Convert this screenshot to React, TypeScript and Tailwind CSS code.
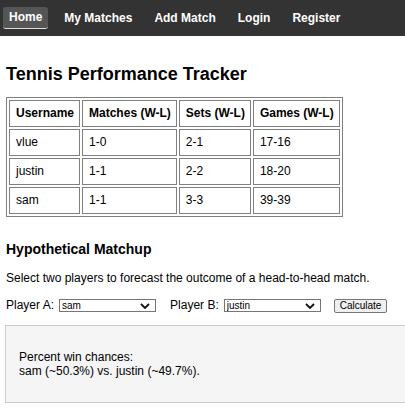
import React from 'react';

const players = [
  { name: 'vlue', matches: '1-0', sets: '2-1', games: '17-16' },
  { name: 'justin', matches: '1-1', sets: '2-2', games: '18-20' },
  { name: 'sam', matches: '1-1', sets: '3-3', games: '39-39' },
];

const navLinks = ['Home', 'My Matches', 'Add Match', 'Login', 'Register'];

const Chevron = () => (
  <svg viewBox="0 0 10 6" className="pointer-events-none absolute right-[6px] top-[4px] h-[6px] w-[10px]">
    <path d="M1 1l4 4 4-4" fill="none" stroke="#111" strokeWidth="1.8" />
  </svg>
);

const PlayerSelect = ({ value, options }: { value: string; options: string[] }) => (
  <div className="relative w-[97px]">
    <select
      defaultValue={value}
      className="block h-[13px] w-full appearance-none rounded-none border border-[#767676] bg-white pl-[2px] text-[10px] leading-[11px] text-black outline-none"
    >
      {options.map((o) => (
        <option key={o} value={o}>
          {o}
        </option>
      ))}
    </select>
    <Chevron />
  </div>
);

export default function App() {
  const names = players.map((p) => p.name);

  return (
    <div className="min-h-screen overflow-hidden bg-white font-['Liberation_Sans',Arial,sans-serif] text-black">
      {/* top nav */}
      <nav className="flex h-[36px] items-center gap-[10px] bg-[#333] px-[3px]">
        {navLinks.map((link, i) => (
          <a
            key={link}
            href="#"
            className={`rounded-[3px] px-[6px] py-[3px] text-[12px] font-bold leading-[15px] text-white ${
              i === 0 ? 'border-b border-[#ddd] bg-[#555]' : ''
            }`}
          >
            {link}
          </a>
        ))}
      </nav>

      <div className="px-[6px]">
        <h1 className="mt-[28px] text-[18px] font-bold leading-[21px]">Tennis Performance Tracker</h1>

        <table className="mt-[12px] border-separate border-spacing-[2px] border border-[#808080] text-[12px] leading-[15px]">
          <thead>
            <tr>
              {['Username', 'Matches (W-L)', 'Sets (W-L)', 'Games (W-L)'].map((h) => (
                <th key={h} className="border border-[#808080] py-[5px] pl-[6px] pr-[5px] text-left font-bold">
                  {h}
                </th>
              ))}
            </tr>
          </thead>
          <tbody>
            {players.map((p) => (
              <tr key={p.name}>
                <td className="border border-[#808080] py-[5px] pl-[6px] pr-[5px]">{p.name}</td>
                <td className="border border-[#808080] py-[5px] pl-[6px] pr-[5px]">{p.matches}</td>
                <td className="border border-[#808080] py-[5px] pl-[6px] pr-[5px]">{p.sets}</td>
                <td className="border border-[#808080] py-[5px] pl-[6px] pr-[5px]">{p.games}</td>
              </tr>
            ))}
          </tbody>
        </table>

        <h2 className="mt-[24px] text-[14px] font-bold leading-[17px]">Hypothetical Matchup</h2>
        <p className="mt-[13px] text-[12px] leading-[14px]">
          Select two players to forecast the outcome of a head-to-head match.
        </p>

        <div className="mt-[13px] flex items-center text-[12px] leading-[15px]">
          <span>Player A:</span>
          <div className="ml-[5px]">
            <PlayerSelect value="sam" options={names} />
          </div>
          <span className="ml-[14px]">Player B:</span>
          <div className="ml-[5px]">
            <PlayerSelect value="justin" options={names} />
          </div>
          <button className="ml-[13px] h-[14px] rounded-[2px] border border-[#767676] bg-[#efefef] px-[5px] text-[10px] leading-[12px]">
            Calculate
          </button>
        </div>

        <div className="-ml-[1px] mt-[12px] w-[420px] border border-[#ccc] bg-[#f5f5f5] px-[13px] py-[24px] text-[12px] leading-[14px]">
          <p>Percent win chances:</p>
          <p>sam (~50.3%) vs. justin (~49.7%).</p>
        </div>
      </div>
    </div>
  );
}
